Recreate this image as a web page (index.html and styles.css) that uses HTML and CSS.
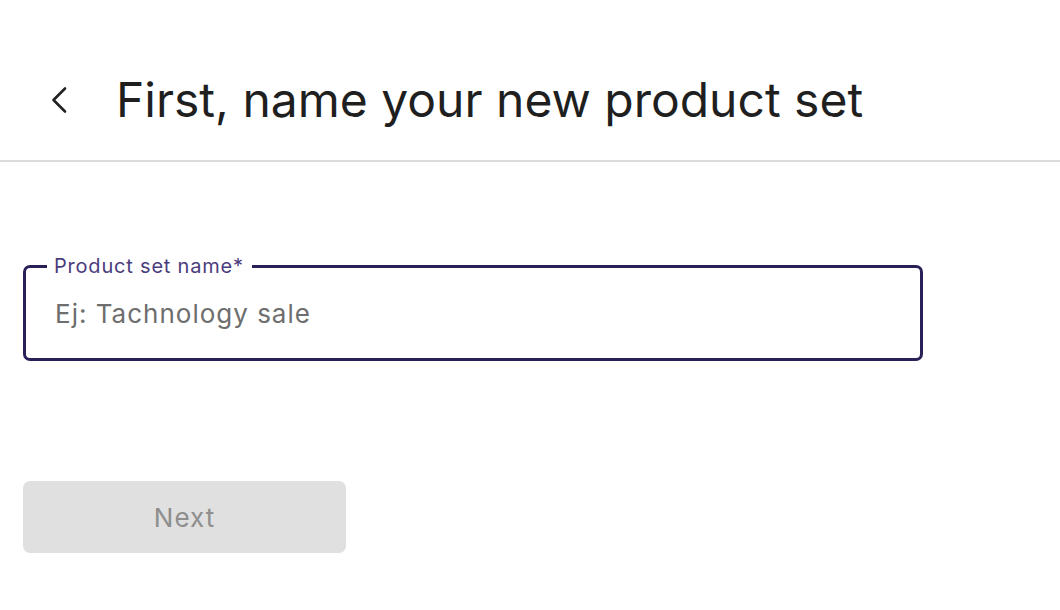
FILE: index.html
```html
<!DOCTYPE html>
<html>
<head>
<meta charset="utf-8">
<link rel="stylesheet" href="styles.css">
</head>
<body>
<header class="header">
  <button class="back" aria-label="Back">
    <svg width="20" height="28" viewBox="0 0 20 28"><path d="M16 2.5 L4.5 14 L16 25.5" fill="none" stroke="#222" stroke-width="2.6" stroke-linecap="round" stroke-linejoin="round"/></svg>
  </button>
  <h1 class="title">First, name your new product set</h1>
</header>
<main class="content">
  <fieldset class="field">
    <legend class="legend">Product set name*</legend>
    <input class="input" type="text" placeholder="Ej: Tachnology sale">
  </fieldset>
  <button class="next" disabled>Next</button>
</main>
</body>
</html>
```
FILE: styles.css
```css
html, body {
  margin: 0;
  padding: 0;
  background: #fff;
  font-family: Inter, "Noto Sans", sans-serif;
}
.header {
  display: flex;
  align-items: center;
  height: 162px;
  border-bottom: 2px solid #dcdcdc;
  padding: 40px 0 0 49px;
  box-sizing: border-box;
}
.back {
  background: none;
  border: 0;
  padding: 0;
  width: 22px;
  height: 30px;
  display: flex;
  align-items: center;
  margin-right: 45px;
}
.title {
  margin: 0;
  font-weight: 400;
  font-size: 48px;
  color: #1f1f1f;
  letter-spacing: 0;
  margin-top: -2px;
}
.content {
  padding: 0 23px;
  display: flex;
  flex-direction: column;
  align-items: flex-start;
}
.field {
  margin: 93px 0 0;
  width: 900px;
  box-sizing: border-box;
  height: 106px;
  border: 3px solid #2b1f57;
  border-radius: 7px;
  padding: 0 29px;
}
.legend {
  font-size: 20px;
  letter-spacing: 0.8px;
  color: #4a3c7d;
  padding: 0 8px 0 7px;
  margin-left: -8px;
  line-height: 22px;
}
.input {
  border: 0;
  outline: none;
  padding: 0;
  width: 100%;
  font-family: inherit;
  font-size: 26px;
  letter-spacing: 1px;
  color: #222;
  margin-top: 18px;
  height: 36px;
}
.input::placeholder {
  color: #6e6e6e;
}
.next {
  margin-top: 120px;
  width: 323px;
  height: 72px;
  border: 0;
  border-radius: 7px;
  background: #e0e0e0;
  color: #8e8e8e;
  font-family: inherit;
  font-size: 26px;
  letter-spacing: 1px;
}
```
